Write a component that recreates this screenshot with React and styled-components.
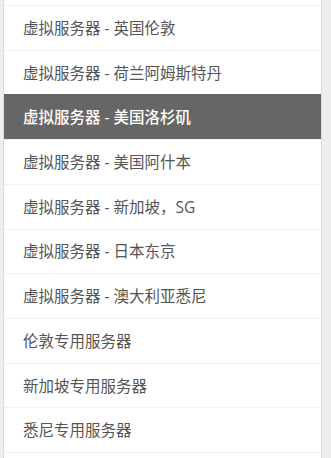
import styled, { createGlobalStyle } from 'styled-components'

const GlobalStyle = createGlobalStyle`
    html, body {
        margin: 0;
        padding: 0;
        background: #eeeeee;
    }

    body {
        font-family: "Open Sans", "Noto Sans CJK SC", sans-serif;
    }
`

const items = [
    '虚拟服务器 - 英国伦敦',
    '虚拟服务器 - 荷兰阿姆斯特丹',
    '虚拟服务器 - 美国洛杉矶',
    '虚拟服务器 - 美国阿什本',
    '虚拟服务器 - 新加坡，SG',
    '虚拟服务器 - 日本东京',
    '虚拟服务器 - 澳大利亚悉尼',
    '伦敦专用服务器',
    '新加坡专用服务器',
    '悉尼专用服务器',
    '',
]

export default function App() {
    return (
        <>
            <GlobalStyle />
            <Page>
                <Panel>
                    {items.map((label, i) =>
                        <Item key={i} $active={i === 2}>{label}</Item>
                    )}
                </Panel>
            </Page>
        </>
    )
}

const Page = styled.div`
    width: 331px;
    height: 458px;
    overflow: hidden;
    display: flex;
`

const Panel = styled.ul`
    list-style: none;
    margin: 0 0 0 3px;
    padding: 5px 0 0;
    width: 319px;
    box-sizing: border-box;
    background: #fff;
    border-left: 1px solid #dddddd;
    border-right: 1px solid #dddddd;
`

const Item = styled.li`
    height: 44.73px;
    box-sizing: border-box;
    display: flex;
    align-items: center;
    padding: 0 0 1px 19px;
    border-top: 1px solid ${p => p.$active ? '#666666' : '#f0f0f0'};
    background: ${p => p.$active ? '#666666' : '#fff'};
    color: ${p => p.$active ? '#fff' : '#555555'};
    font-size: 15.5px;
    font-weight: ${p => p.$active ? 500 : 400};
    white-space: nowrap;
`
